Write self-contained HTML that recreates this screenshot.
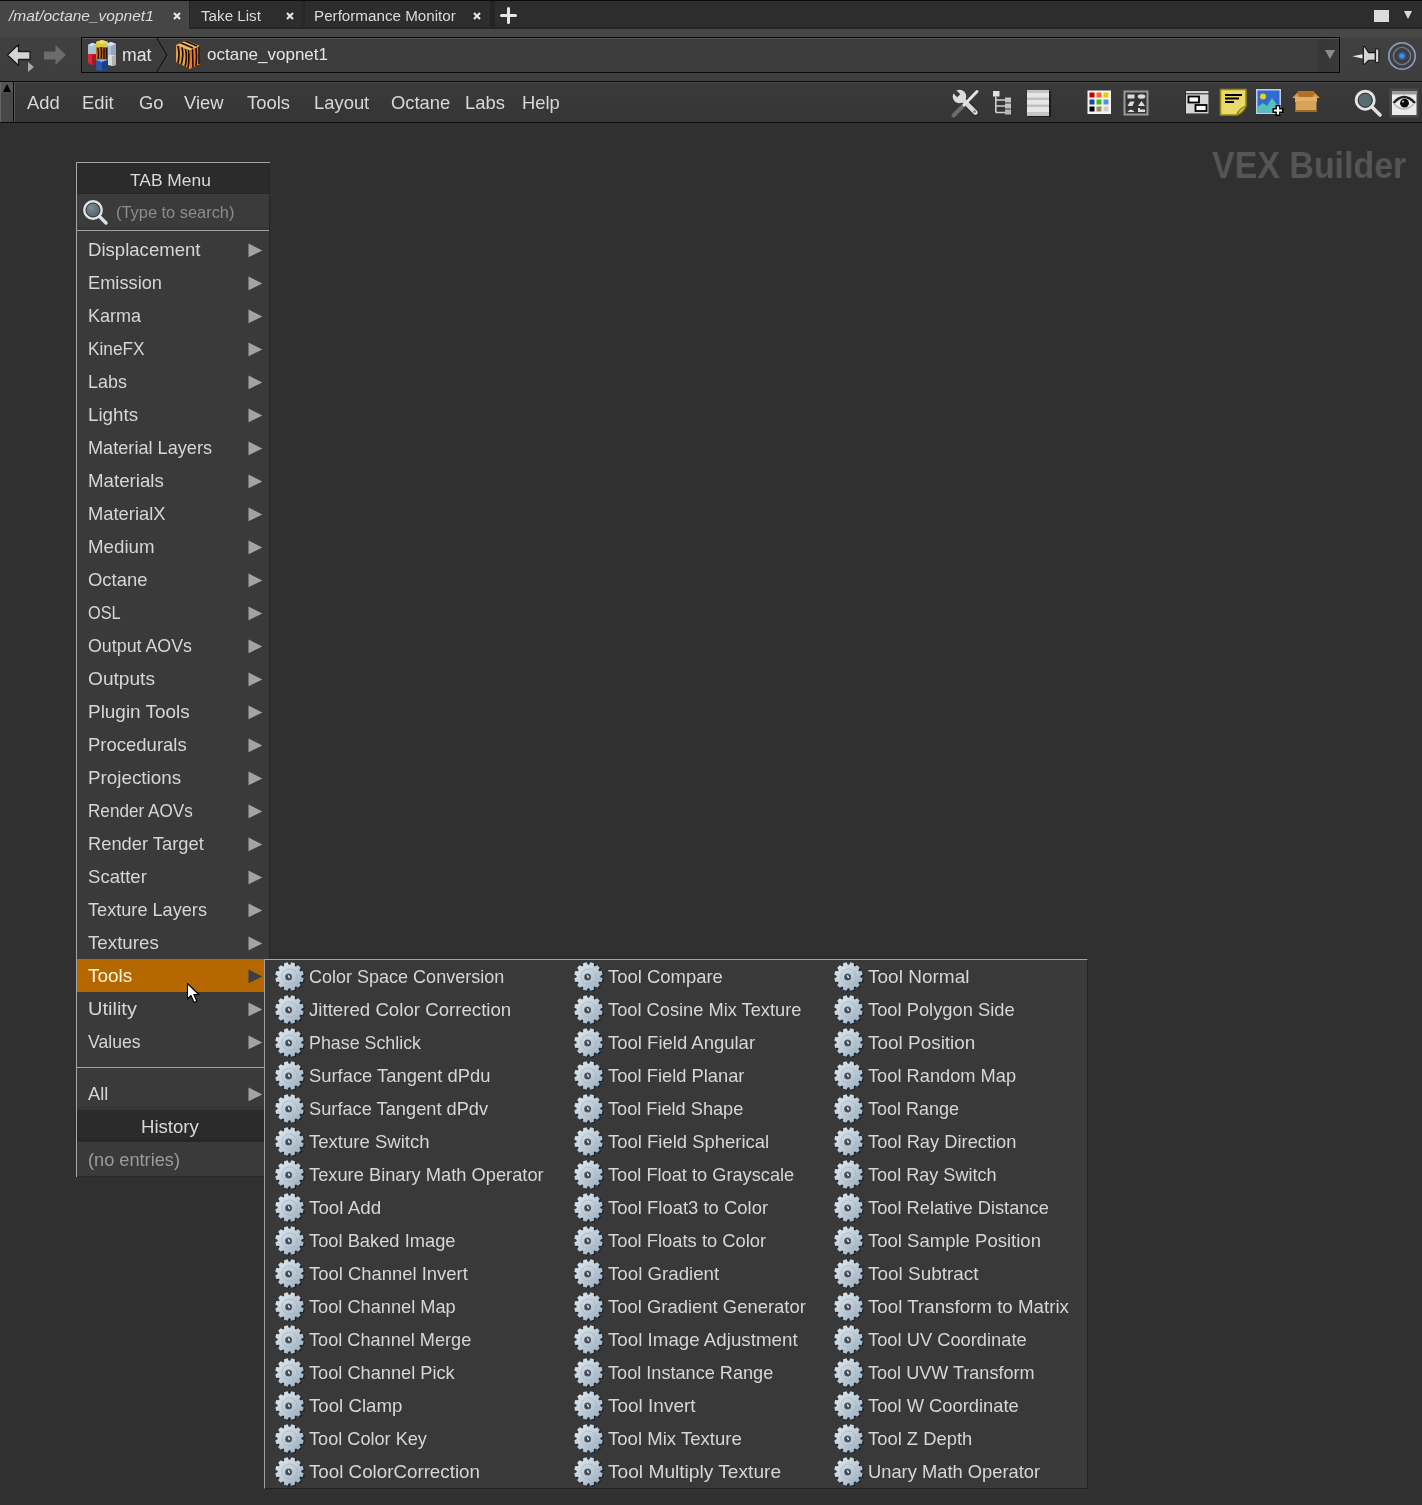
<!DOCTYPE html><html><head><meta charset="utf-8"><style>
*{box-sizing:border-box}
html,body{margin:0;padding:0}
body{width:1422px;height:1505px;background:#303030;position:relative;overflow:hidden;font-family:"Liberation Sans", sans-serif;color:#d6d6d6}
.a{position:absolute}
.a,.tab,.mb{will-change:transform}
.t{position:absolute;white-space:nowrap;font-size:18.2px;line-height:35px;height:33px}
.tab{position:absolute;white-space:nowrap;font-size:15.2px;line-height:29px;color:#dadada}
.mb{position:absolute;white-space:nowrap;font-size:18.4px;line-height:40px;top:83px;color:#d8d8d8}
.tri{position:absolute;width:15px;height:15px}
.g{position:absolute;width:32px;height:32px}
</style></head><body>
<svg width="0" height="0" style="position:absolute"><defs>
<linearGradient id="gg" x1="0" y1="0" x2="1" y2="1"><stop offset="0" stop-color="#e4ecf2"/><stop offset="0.5" stop-color="#c0ced9"/><stop offset="1" stop-color="#93a7b8"/></linearGradient>
<radialGradient id="gh" cx="50%" cy="50%" r="50%"><stop offset="0" stop-color="#2a323c"/><stop offset="1" stop-color="#55606b"/></radialGradient>
<symbol id="gear" viewBox="0 0 32 32"><path d="M17.13,4.32 L18.48,1.84 L22.02,2.78 L21.95,5.61 L23.04,6.24 L25.45,4.76 L28.04,7.35 L26.56,9.76 L27.19,10.85 L30.02,10.78 L30.96,14.32 L28.48,15.67 L28.48,16.93 L30.96,18.28 L30.02,21.82 L27.19,21.75 L26.56,22.84 L28.04,25.25 L25.45,27.84 L23.04,26.36 L21.95,26.99 L22.02,29.82 L18.48,30.76 L17.13,28.28 L15.87,28.28 L14.52,30.76 L10.98,29.82 L11.05,26.99 L9.96,26.36 L7.55,27.84 L4.96,25.25 L6.44,22.84 L5.81,21.75 L2.98,21.82 L2.04,18.28 L4.52,16.93 L4.52,15.67 L2.04,14.32 L2.98,10.78 L5.81,10.85 L6.44,9.76 L4.96,7.35 L7.55,4.76 L9.96,6.24 L11.05,5.61 L10.98,2.78 L14.52,1.84 L15.87,4.32Z" fill="#142032" opacity="0.9"/><path d="M16.12,3.72 L17.44,1.33 L20.90,2.26 L20.86,4.99 L21.93,5.60 L24.26,4.20 L26.80,6.74 L25.40,9.07 L26.01,10.14 L28.74,10.10 L29.67,13.56 L27.28,14.88 L27.28,16.12 L29.67,17.44 L28.74,20.90 L26.01,20.86 L25.40,21.93 L26.80,24.26 L24.26,26.80 L21.93,25.40 L20.86,26.01 L20.90,28.74 L17.44,29.67 L16.12,27.28 L14.88,27.28 L13.56,29.67 L10.10,28.74 L10.14,26.01 L9.07,25.40 L6.74,26.80 L4.20,24.26 L5.60,21.93 L4.99,20.86 L2.26,20.90 L1.33,17.44 L3.72,16.12 L3.72,14.88 L1.33,13.56 L2.26,10.10 L4.99,10.14 L5.60,9.07 L4.20,6.74 L6.74,4.20 L9.07,5.60 L10.14,4.99 L10.10,2.26 L13.56,1.33 L14.88,3.72Z" fill="url(#gg)"/><circle cx="15.5" cy="15.5" r="7.6" fill="none" stroke="#a6b3bc" stroke-width="0.7"/><circle cx="14.6" cy="16.1" r="3.5" fill="url(#gh)"/><path d="M13.7,14.7 L15.0,14.1 L16.2,16.7 L14.9,17.3 Z" fill="#f4f6f8"/></symbol>
</defs></svg>

<div class="a" style="left:0px;top:0px;width:1422px;height:1px;background:#0a0a0a;"></div>
<div class="a" style="left:0px;top:1px;width:1422px;height:27px;background:#2d2d2d;"></div>
<div class="a" style="left:0px;top:27px;width:1422px;height:2px;background:#252525;"></div>
<div class="a" style="left:0px;top:1px;width:189px;height:28px;background:#464646;"></div>
<div class="tab" style="left:9px;top:1px;font-style:italic;font-size:15.5px">/mat/octane_vopnet1</div>
<svg class="a" style="left:172px;top:11px" width="10" height="10" viewBox="0 0 10 10"><path d="M2,2 L8,8 M8,2 L2,8" stroke="#e8e8e8" stroke-width="2.1"/></svg>
<div class="a" style="left:189px;top:1px;width:1px;height:28px;background:#262626;"></div>
<div class="tab" style="left:201px;top:1px">Take List</div>
<svg class="a" style="left:285px;top:11px" width="10" height="10" viewBox="0 0 10 10"><path d="M2,2 L8,8 M8,2 L2,8" stroke="#e8e8e8" stroke-width="2.1"/></svg>
<div class="a" style="left:302px;top:1px;width:3px;height:28px;background:#272727;"></div>
<div class="tab" style="left:314px;top:1px">Performance Monitor</div>
<svg class="a" style="left:472px;top:11px" width="10" height="10" viewBox="0 0 10 10"><path d="M2,2 L8,8 M8,2 L2,8" stroke="#e8e8e8" stroke-width="2.1"/></svg>
<div class="a" style="left:490px;top:1px;width:5px;height:28px;background:#242424;"></div>
<svg class="a" style="left:500px;top:7px" width="17" height="17" viewBox="0 0 17 17"><path d="M8.5,1.5 L8.5,15.5 M1.5,8.5 L15.5,8.5" stroke="#e6e6e6" stroke-width="3" stroke-linecap="round"/></svg>
<div class="a" style="left:1374px;top:10px;width:15px;height:12px;background:#dcdcdc;"></div>
<div class="a" style="left:1404px;top:11px;width:0;height:0;border-left:4.5px solid transparent;border-right:4.5px solid transparent;border-top:8px solid #dcdcdc"></div>
<div class="a" style="left:0px;top:29px;width:1422px;height:52px;background:linear-gradient(#474747,#474747 8px,#404040 9px,#3e3e3e);"></div>
<div class="a" style="left:0px;top:29px;width:189px;height:8px;background:#464646;"></div>
<div class="a" style="left:0px;top:81px;width:1422px;height:1px;background:#0a0a0a;"></div>
<div class="a" style="left:81px;top:37px;width:1259px;height:36px;background:#3c3c3c;border:1px solid #0a0a0a"></div>
<div class="a" style="left:82px;top:38px;width:1257px;height:1px;background:#575757;"></div>
<div class="a" style="left:1318px;top:39px;width:21px;height:33px;background:linear-gradient(90deg,#363636,#3a3a3a);"></div>
<div class="a" style="left:1325px;top:50px;width:0;height:0;border-left:5px solid transparent;border-right:5px solid transparent;border-top:9px solid #8c8c8c"></div>
<div class="a" style="left:122px;top:38px;font-size:17.6px;line-height:34px;color:#e4e4e4;white-space:nowrap">mat</div>
<svg class="a" style="left:155px;top:38px" width="16" height="34"><path d="M3,0 L13,17 L3,34" fill="none" stroke="#555" stroke-width="1"/><path d="M2,0 L12,17 L2,34" fill="none" stroke="#151515" stroke-width="1.4"/></svg>
<div class="a" style="left:207px;top:38px;font-size:17px;line-height:34px;color:#e4e4e4;white-space:nowrap">octane_vopnet1</div>
<svg class="a" style="left:86px;top:39px" width="32" height="33" viewBox="0 0 32 33">
<path d="M2,6 L6,4 L10,5 L10,15 L2,15Z" fill="#a8c4d0"/><path d="M2,6 L6,4 L10,5 L6,7Z" fill="#d8e4ea"/>
<path d="M2,15 L10,15 L10,25 L6,26 L2,24Z" fill="#d42a38"/><path d="M6,16 L10,15 L10,25 L6,26Z" fill="#a81420"/>
<path d="M10,3 L16,1 L22,3 L22,8 L10,8Z" fill="#e0c830"/><path d="M10,3 L16,1 L22,3 L16,5Z" fill="#f4e060"/>
<path d="M20,5 L25,3 L30,5 L30,16 L20,16Z" fill="#b4c2d6"/><path d="M20,5 L25,3 L30,5 L25,7Z" fill="#dde4ee"/><path d="M25,7 L30,5 L30,16 L25,16Z" fill="#96a6bc"/>
<path d="M22,16 L30,16 L30,26 L26,27 L22,26Z" fill="#d8dcd8"/><path d="M26,17 L30,16 L30,26 L26,27Z" fill="#b0b4b0"/>
<path d="M10,8 L22,8 L22,21 L10,21Z" fill="#c87820"/><path d="M16,8 L22,8 L22,21 L16,21Z" fill="#a85a10"/><path d="M12,9 Q13,15 12,20 M15,8 Q16,14 15,21 M18,9 L18,20 M20.5,9 L20.5,20" stroke="#2a1206" stroke-width="1.5" fill="none"/>
<path d="M10,21 L16,20 L22,21 L22,31 L16,32 L10,31Z" fill="#2858a8"/><path d="M10,21 L16,20 L22,21 L16,23Z" fill="#90b0e0"/><path d="M16,23 L22,21 L22,31 L16,32Z" fill="#1c4088"/>
</svg>
<svg class="a" style="left:175px;top:40px" width="28" height="31" viewBox="0 0 28 31">
<defs><clipPath id="tl"><path d="M1,5 L15,10.5 L15,29 L1,22Z"/></clipPath><clipPath id="tr"><path d="M15,10.5 L25,6 L25,24 L15,29Z"/></clipPath><clipPath id="tt"><path d="M1,5 L11,0.5 L25,6 L15,10.5Z"/></clipPath></defs>
<path d="M1,5 L11,0.5 L25,6 L15,10.5Z" fill="#e9b868"/>
<path d="M1,5 L15,10.5 L15,29 L1,22Z" fill="#e6a040"/>
<path d="M15,10.5 L25,6 L25,24 L15,29Z" fill="#f07a18"/>
<g clip-path="url(#tt)" stroke="#1a0c02" stroke-width="1.6" fill="none"><path d="M4,2 L18,8 M8,0 L22,6 M13,-1 L26,4"/></g>
<g clip-path="url(#tl)" stroke="#1a0c02" stroke-width="1.7" fill="none"><path d="M3,6 Q5,14 3,23 M7,7 Q9,16 6,25 M10.5,9 Q12.5,18 10,27 M13.5,10 Q14.5,19 13,28"/></g>
<g clip-path="url(#tr)" stroke="#1a0c02" stroke-width="1.6" fill="none"><path d="M17.5,9 L18,28 M21,8 Q22,17 21,26 M24,6 L24,24"/></g>
</svg>
<svg class="a" style="left:5px;top:43px" width="32" height="31" viewBox="0 0 32 31"><path d="M2.5,12 L13.5,1.5 L13.5,8.5 L25,8.5 L25,16.5 L13.5,16.5 L13.5,22.5 Z" fill="#d4d4d4" stroke="#1c1c1c" stroke-width="1.3" stroke-linejoin="round"/><path d="M23,19 L29,24 L23,29 Z" fill="#a8a8a8"/></svg>
<svg class="a" style="left:42px;top:43px" width="26" height="26" viewBox="0 0 26 26"><path d="M24,12 L13.5,2 L13.5,8.5 L2,8.5 L2,16.5 L13.5,16.5 L13.5,22 Z" fill="#6c6c6c"/></svg>
<svg class="a" style="left:1350px;top:44px" width="32" height="24" viewBox="0 0 32 24"><path d="M2.3,12.3 L12.6,10.2 L12.6,14.4 Z" fill="#e8e8e8"/><path d="M13.4,2.6 L14.8,2.6 L18.6,8.6 L25.2,8.6 L25.2,16.2 L18.6,16.2 L14.8,20.2 L13.4,20.2 Z" fill="#d4d4d4" stroke="#151515" stroke-width="1.1" stroke-linejoin="round"/><rect x="25.6" y="5" width="3.2" height="13.4" fill="#dcdcdc" stroke="#151515" stroke-width="1"/></svg>
<svg class="a" style="left:1386px;top:40px" width="32" height="32" viewBox="0 0 32 32"><defs><radialGradient id="bd" cx="50%" cy="50%" r="50%"><stop offset="0" stop-color="#5aa8f0"/><stop offset="0.6" stop-color="#2a70c8"/><stop offset="1" stop-color="#2a70c8" stop-opacity="0"/></radialGradient></defs><circle cx="16" cy="16" r="13.2" fill="none" stroke="#8796b4" stroke-width="1.8"/><circle cx="16" cy="16" r="8.6" fill="none" stroke="#6d7a92" stroke-width="1.4"/><circle cx="16" cy="16" r="4.6" fill="url(#bd)"/></svg>
<div class="a" style="left:0px;top:82px;width:1422px;height:40px;background:linear-gradient(#484848 0,#484848 1px,#3a3a3a 1px,#353535);"></div>
<div class="a" style="left:0px;top:122px;width:1422px;height:1px;background:#0c0c0c;"></div>
<div class="a" style="left:0px;top:82px;width:13px;height:40px;background:linear-gradient(#545454,#545454 10px,#474747 11px,#474747);"></div>
<div class="a" style="left:0px;top:82px;width:1px;height:40px;background:#666;"></div>
<div class="a" style="left:13px;top:82px;width:1px;height:40px;background:#0c0c0c;"></div>
<div class="a" style="left:14px;top:82px;width:1px;height:40px;background:#555;"></div>
<div class="a" style="left:2.5px;top:83.5px;width:0;height:0;border-left:4px solid transparent;border-right:4px solid transparent;border-bottom:8px solid #000"></div>
<div class="mb" style="left:27px">Add</div>
<div class="mb" style="left:82px">Edit</div>
<div class="mb" style="left:139px">Go</div>
<div class="mb" style="left:184px">View</div>
<div class="mb" style="left:247px">Tools</div>
<div class="mb" style="left:314px">Layout</div>
<div class="mb" style="left:391px">Octane</div>
<div class="mb" style="left:465px">Labs</div>
<div class="mb" style="left:522px">Help</div>
<svg class="a" style="left:950px;top:87px" width="32" height="32" viewBox="0 0 32 32">
<path d="M12.5,12.5 L26,26" stroke="#151515" stroke-width="6.4" stroke-linecap="round" opacity="0.45"/>
<path d="M10,10 L25.5,25.5" stroke="#d8d8d8" stroke-width="4.6" stroke-linecap="round"/>
<circle cx="24.6" cy="24.6" r="1.4" fill="#808080"/>
<circle cx="9.5" cy="9.5" r="6.8" fill="#dcdcdc"/>
<path d="M10.3,7.2 L2.8,-0.3 L-0.3,2.8 L7.2,10.3 Z" fill="#393939"/>
<path d="M3.5,28.5 L14,18" stroke="#6c6c6c" stroke-width="4" stroke-linecap="round"/>
<path d="M14,18 L27,4.5" stroke="#e4e4e4" stroke-width="3" stroke-linecap="round"/>
</svg>
<svg class="a" style="left:992px;top:90px" width="20" height="26" viewBox="0 0 20 26">
<rect x="1" y="1" width="6.5" height="5.5" fill="#e2e2e2"/>
<path d="M3.8,6.5 L3.8,22.5 M3.8,10 L13,10 M3.8,16 L13,16 M3.8,22.5 L13,22.5" stroke="#cfcfcf" stroke-width="1.6"/>
<rect x="13" y="7.5" width="6" height="5" fill="#c2c2c2"/><rect x="13" y="13.5" width="6" height="5" fill="#c2c2c2"/><rect x="13" y="19.5" width="6" height="5" fill="#b8b8b8"/>
</svg>
<svg class="a" style="left:1026px;top:89px" width="25" height="28" viewBox="0 0 25 28">
<rect x="2" y="2" width="23" height="26" fill="#111" opacity="0.7"/>
<rect x="1" y="1" width="22" height="26" fill="#e6e6e6"/>
<rect x="1" y="1" width="22" height="3" fill="#c4c4c4"/><rect x="1" y="8.5" width="22" height="2.5" fill="#c0c0c0"/><rect x="1" y="15.5" width="22" height="2.5" fill="#c0c0c0"/><rect x="1" y="23" width="22" height="4" fill="#c4c4c4"/>
</svg>
<svg class="a" style="left:1087px;top:90px" width="25" height="25" viewBox="0 0 25 25">
<rect x="0.5" y="0.5" width="23.5" height="23.5" fill="#f4f4f4"/>
<rect x="2.5" y="2.5" width="5" height="5" fill="#c00000"/><rect x="9.5" y="2.5" width="5" height="5" fill="#f06a10"/><rect x="16.5" y="2.5" width="5" height="5" fill="#e4cc10"/>
<rect x="2.5" y="9.5" width="5" height="5" fill="#1a4a98"/><rect x="9.5" y="9.5" width="5" height="5" fill="#3cbc18"/><rect x="16.5" y="9.5" width="5" height="5" fill="#5a8cd8"/>
<rect x="2.5" y="16.5" width="5" height="5" fill="#000"/><rect x="9.5" y="16.5" width="5" height="5" fill="#a08a62"/><rect x="16.5" y="16.5" width="5" height="5" fill="#cfcfc6"/>
</svg>
<svg class="a" style="left:1123px;top:90px" width="27" height="26" viewBox="0 0 27 26">
<rect x="1.5" y="1.5" width="23" height="23" fill="#333" stroke="#9a9a9a" stroke-width="2"/>
<rect x="4.5" y="4.5" width="7" height="4" fill="#dcdcdc"/><ellipse cx="18.5" cy="6.5" rx="3.8" ry="2.2" fill="#dcdcdc"/>
<path d="M4.5,16 L7,11.5 L11.5,11.5 L9.5,16 Z" fill="#dcdcdc"/><path d="M15,16 L18.5,11 L22,16 Z" fill="#dcdcdc"/>
<path d="M4.5,22 Q8,17 11.5,22 Z" fill="#dcdcdc"/><path d="M15,22 L15,18 L17,18 L17,19.5 L22,19.5 L22,22 Z" fill="#dcdcdc"/>
</svg>
<svg class="a" style="left:1185px;top:90px" width="25" height="25" viewBox="0 0 25 25">
<rect x="0.5" y="0.5" width="23.5" height="23.5" fill="#222"/>
<rect x="1" y="1" width="22.5" height="2.3" fill="#d4d4d4"/>
<rect x="1" y="4.3" width="22.5" height="19.2" fill="#d6d6d6"/>
<rect x="3.5" y="6.5" width="10.5" height="6" fill="#fafafa" stroke="#000" stroke-width="1.8"/>
<rect x="10.5" y="15" width="11" height="6" fill="#fafafa" stroke="#000" stroke-width="1.8"/>
</svg>
<svg class="a" style="left:1219px;top:88px" width="29" height="29" viewBox="0 0 29 29">
<path d="M1.5,1.5 L27,1.5 L27,18 Q24,25 18,27 L1.5,27 Z" fill="#e9da6a" stroke="#9a8a10" stroke-width="1.6"/>
<path d="M18,27 Q19,21 27,18" fill="#c8b440" stroke="#8a7a10" stroke-width="1.3"/>
<path d="M6,7 L23,7 M6,10.5 L20,10.5 M6,14 L15,14" stroke="#000" stroke-width="1.9"/>
</svg>
<svg class="a" style="left:1255px;top:88px" width="32" height="30" viewBox="0 0 32 30">
<rect x="1" y="1" width="25" height="25" fill="#bcd0e4"/>
<rect x="2.5" y="2.5" width="22" height="22" fill="#2e6cd0"/>
<circle cx="8" cy="8.5" r="3" fill="#f0d010"/>
<path d="M2.5,24.5 L2.5,19 L8,15 L12,18 L17,10 L24.5,20 L24.5,24.5 Z" fill="#5cc8b8" opacity="0.9"/>
<path d="M23,17 L23,28 M17.5,22.5 L28.5,22.5" stroke="#000" stroke-width="5"/>
<path d="M23,18.5 L23,26.5 M19,22.5 L27,22.5" stroke="#fff" stroke-width="2.2"/>
</svg>
<svg class="a" style="left:1291px;top:89px" width="30" height="24" viewBox="0 0 30 24">
<path d="M4,8 L7,2 L23,2 L26,8 Z" fill="#b07020"/>
<path d="M1,9 L6,4 L9,9 Z M29,9 L24,4 L21,9 Z" fill="#d89a40"/>
<rect x="4" y="8" width="22" height="5" fill="#e0b070"/>
<rect x="4.5" y="12" width="21" height="11" fill="#d8a258"/>
<path d="M4.5,22 L25.5,22" stroke="#a06a20" stroke-width="2"/>
</svg>
<svg class="a" style="left:1353px;top:88px" width="30" height="30" viewBox="0 0 30 30">
<line x1="18.5" y1="18.5" x2="27" y2="27" stroke="#e0e0e0" stroke-width="3.6" stroke-linecap="round"/>
<circle cx="12.2" cy="12.2" r="9" fill="#5b6b73" stroke="#e4e4e4" stroke-width="3"/>
<circle cx="12.2" cy="12.2" r="7" fill="none" stroke="#2c3236" stroke-width="1"/>
</svg>
<svg class="a" style="left:1389px;top:88px" width="30" height="30" viewBox="0 0 30 30">
<rect x="0.5" y="0.5" width="29" height="29" fill="#4a4a4a"/>
<rect x="3" y="3" width="24.5" height="24" fill="#ececec"/>
<rect x="3" y="3" width="24.5" height="3.5" fill="#9c9c9c"/>
<path d="M4.5,15 Q15,3 26,15" fill="none" stroke="#222" stroke-width="2.3"/>
<path d="M5,16 Q15,26 25,16" fill="none" stroke="#b8b8b8" stroke-width="1.6"/>
<circle cx="15.5" cy="15.2" r="4.4" fill="#0a0a0a"/>
<circle cx="14" cy="13.6" r="1.1" fill="#bbb"/>
</svg>

<div class="a" style="left:1212px;top:142px;font-size:36.3px;line-height:48px;font-weight:bold;color:#555555;white-space:nowrap;transform:scaleX(0.935);transform-origin:0 0">VEX Builder</div>
<div class="a" style="left:76px;top:162px;width:194px;height:1015px;background:#3a3a3a;"></div>
<div class="a" style="left:269px;top:162px;width:1px;height:1015px;background:#262626;"></div>
<div class="a" style="left:76px;top:162px;width:194px;height:1px;background:#a6a6a6;"></div>
<div class="a" style="left:76px;top:162px;width:1px;height:1015px;background:#a6a6a6;"></div>
<div class="a" style="left:77px;top:163px;width:192px;height:30px;background:#2b2b2b;"></div>
<div class="a" style="left:77px;top:193px;width:192px;height:1px;background:#262626;"></div>
<div class="a" style="left:130px;top:163px;line-height:35px;font-size:17.4px;color:#d8d8d8;white-space:nowrap">TAB Menu</div>
<div class="a" style="left:77px;top:194px;width:192px;height:33px;background:#3b3b3b;"></div>
<div class="a" style="left:77px;top:227px;width:192px;height:3px;background:#363636;"></div>
<div class="a" style="left:77px;top:230px;width:192px;height:1px;background:#a0a0a0;"></div>
<svg class="a" style="left:80px;top:197px" width="30" height="30" viewBox="0 0 30 30"><line x1="18" y1="18" x2="26" y2="26" stroke="#dfe2e2" stroke-width="3.4" stroke-linecap="round"/><defs><radialGradient id="mg" cx="40%" cy="35%" r="65%"><stop offset="0" stop-color="#7d8c92"/><stop offset="1" stop-color="#4e5c64"/></radialGradient></defs><circle cx="13" cy="13" r="8.6" fill="url(#mg)" stroke="#e2e4e4" stroke-width="2.6"/><circle cx="13" cy="13" r="7" fill="none" stroke="#2c3438" stroke-width="0.9"/></svg>
<div class="a" style="left:115.5px;top:194px;line-height:37px;font-size:16.4px;color:#8c8c8c;white-space:nowrap">(Type to search)</div>
<div class="t" style="left:88px;top:233px;transform:scaleX(1.0212);transform-origin:0 0;">Displacement</div>
<svg class="tri" style="left:247.5px;top:242.5px" viewBox="0 0 15 15"><path d="M0.5,0.6 L14.3,7.4 L0.5,14.2Z" fill="#a3a3a3"/></svg>
<div class="t" style="left:88px;top:266px;transform:scaleX(1.0028);transform-origin:0 0;">Emission</div>
<svg class="tri" style="left:247.5px;top:275.5px" viewBox="0 0 15 15"><path d="M0.5,0.6 L14.3,7.4 L0.5,14.2Z" fill="#a3a3a3"/></svg>
<div class="t" style="left:88px;top:299px;transform:scaleX(0.9924);transform-origin:0 0;">Karma</div>
<svg class="tri" style="left:247.5px;top:308.5px" viewBox="0 0 15 15"><path d="M0.5,0.6 L14.3,7.4 L0.5,14.2Z" fill="#a3a3a3"/></svg>
<div class="t" style="left:88px;top:332px;transform:scaleX(0.9478);transform-origin:0 0;">KineFX</div>
<svg class="tri" style="left:247.5px;top:341.5px" viewBox="0 0 15 15"><path d="M0.5,0.6 L14.3,7.4 L0.5,14.2Z" fill="#a3a3a3"/></svg>
<div class="t" style="left:88px;top:365px;transform:scaleX(0.9867);transform-origin:0 0;">Labs</div>
<svg class="tri" style="left:247.5px;top:374.5px" viewBox="0 0 15 15"><path d="M0.5,0.6 L14.3,7.4 L0.5,14.2Z" fill="#a3a3a3"/></svg>
<div class="t" style="left:88px;top:398px;transform:scaleX(1.0323);transform-origin:0 0;">Lights</div>
<svg class="tri" style="left:247.5px;top:407.5px" viewBox="0 0 15 15"><path d="M0.5,0.6 L14.3,7.4 L0.5,14.2Z" fill="#a3a3a3"/></svg>
<div class="t" style="left:88px;top:431px;transform:scaleX(0.9976);transform-origin:0 0;">Material Layers</div>
<svg class="tri" style="left:247.5px;top:440.5px" viewBox="0 0 15 15"><path d="M0.5,0.6 L14.3,7.4 L0.5,14.2Z" fill="#a3a3a3"/></svg>
<div class="t" style="left:88px;top:464px;transform:scaleX(1.0280);transform-origin:0 0;">Materials</div>
<svg class="tri" style="left:247.5px;top:473.5px" viewBox="0 0 15 15"><path d="M0.5,0.6 L14.3,7.4 L0.5,14.2Z" fill="#a3a3a3"/></svg>
<div class="t" style="left:88px;top:497px;transform:scaleX(1.0094);transform-origin:0 0;">MaterialX</div>
<svg class="tri" style="left:247.5px;top:506.5px" viewBox="0 0 15 15"><path d="M0.5,0.6 L14.3,7.4 L0.5,14.2Z" fill="#a3a3a3"/></svg>
<div class="t" style="left:88px;top:530px;transform:scaleX(1.0288);transform-origin:0 0;">Medium</div>
<svg class="tri" style="left:247.5px;top:539.5px" viewBox="0 0 15 15"><path d="M0.5,0.6 L14.3,7.4 L0.5,14.2Z" fill="#a3a3a3"/></svg>
<div class="t" style="left:88px;top:563px;transform:scaleX(1.0142);transform-origin:0 0;">Octane</div>
<svg class="tri" style="left:247.5px;top:572.5px" viewBox="0 0 15 15"><path d="M0.5,0.6 L14.3,7.4 L0.5,14.2Z" fill="#a3a3a3"/></svg>
<div class="t" style="left:88px;top:596px;transform:scaleX(0.8986);transform-origin:0 0;">OSL</div>
<svg class="tri" style="left:247.5px;top:605.5px" viewBox="0 0 15 15"><path d="M0.5,0.6 L14.3,7.4 L0.5,14.2Z" fill="#a3a3a3"/></svg>
<div class="t" style="left:88px;top:629px;transform:scaleX(0.9799);transform-origin:0 0;">Output AOVs</div>
<svg class="tri" style="left:247.5px;top:638.5px" viewBox="0 0 15 15"><path d="M0.5,0.6 L14.3,7.4 L0.5,14.2Z" fill="#a3a3a3"/></svg>
<div class="t" style="left:88px;top:662px;transform:scaleX(1.0520);transform-origin:0 0;">Outputs</div>
<svg class="tri" style="left:247.5px;top:671.5px" viewBox="0 0 15 15"><path d="M0.5,0.6 L14.3,7.4 L0.5,14.2Z" fill="#a3a3a3"/></svg>
<div class="t" style="left:88px;top:695px;transform:scaleX(1.0408);transform-origin:0 0;">Plugin Tools</div>
<svg class="tri" style="left:247.5px;top:704.5px" viewBox="0 0 15 15"><path d="M0.5,0.6 L14.3,7.4 L0.5,14.2Z" fill="#a3a3a3"/></svg>
<div class="t" style="left:88px;top:728px;transform:scaleX(1.0168);transform-origin:0 0;">Procedurals</div>
<svg class="tri" style="left:247.5px;top:737.5px" viewBox="0 0 15 15"><path d="M0.5,0.6 L14.3,7.4 L0.5,14.2Z" fill="#a3a3a3"/></svg>
<div class="t" style="left:88px;top:761px;transform:scaleX(1.0350);transform-origin:0 0;">Projections</div>
<svg class="tri" style="left:247.5px;top:770.5px" viewBox="0 0 15 15"><path d="M0.5,0.6 L14.3,7.4 L0.5,14.2Z" fill="#a3a3a3"/></svg>
<div class="t" style="left:88px;top:794px;transform:scaleX(0.9416);transform-origin:0 0;">Render AOVs</div>
<svg class="tri" style="left:247.5px;top:803.5px" viewBox="0 0 15 15"><path d="M0.5,0.6 L14.3,7.4 L0.5,14.2Z" fill="#a3a3a3"/></svg>
<div class="t" style="left:88px;top:827px;transform:scaleX(1.0070);transform-origin:0 0;">Render Target</div>
<svg class="tri" style="left:247.5px;top:836.5px" viewBox="0 0 15 15"><path d="M0.5,0.6 L14.3,7.4 L0.5,14.2Z" fill="#a3a3a3"/></svg>
<div class="t" style="left:88px;top:860px;transform:scaleX(1.0212);transform-origin:0 0;">Scatter</div>
<svg class="tri" style="left:247.5px;top:869.5px" viewBox="0 0 15 15"><path d="M0.5,0.6 L14.3,7.4 L0.5,14.2Z" fill="#a3a3a3"/></svg>
<div class="t" style="left:88px;top:893px;transform:scaleX(0.9975);transform-origin:0 0;">Texture Layers</div>
<svg class="tri" style="left:247.5px;top:902.5px" viewBox="0 0 15 15"><path d="M0.5,0.6 L14.3,7.4 L0.5,14.2Z" fill="#a3a3a3"/></svg>
<div class="t" style="left:88px;top:926px;transform:scaleX(1.0296);transform-origin:0 0;">Textures</div>
<svg class="tri" style="left:247.5px;top:935.5px" viewBox="0 0 15 15"><path d="M0.5,0.6 L14.3,7.4 L0.5,14.2Z" fill="#a3a3a3"/></svg>
<div class="a" style="left:77px;top:959px;width:187px;height:33px;background:#b66800;"></div>
<div class="t" style="left:88px;top:959px;color:#fff4dc;transform:scaleX(1.0434);transform-origin:0 0;">Tools</div>
<svg class="tri" style="left:247.5px;top:968.5px" viewBox="0 0 15 15"><path d="M0.5,0.6 L14.3,7.4 L0.5,14.2Z" fill="#3b3e4a"/></svg>
<div class="t" style="left:88px;top:992px;transform:scaleX(1.1000);transform-origin:0 0;">Utility</div>
<svg class="tri" style="left:247.5px;top:1001.5px" viewBox="0 0 15 15"><path d="M0.5,0.6 L14.3,7.4 L0.5,14.2Z" fill="#a3a3a3"/></svg>
<div class="t" style="left:88px;top:1025px;transform:scaleX(0.9682);transform-origin:0 0;">Values</div>
<svg class="tri" style="left:247.5px;top:1034.5px" viewBox="0 0 15 15"><path d="M0.5,0.6 L14.3,7.4 L0.5,14.2Z" fill="#a3a3a3"/></svg>
<div class="a" style="left:77px;top:1067px;width:192px;height:1px;background:#a0a0a0;"></div>
<div class="t" style="left:88px;top:1077px">All</div>
<svg class="tri" style="left:247.5px;top:1086.5px" viewBox="0 0 15 15"><path d="M0.5,0.6 L14.3,7.4 L0.5,14.2Z" fill="#a3a3a3"/></svg>
<div class="a" style="left:77px;top:1106px;width:192px;height:4px;background:#363636;"></div>
<div class="a" style="left:77px;top:1110px;width:192px;height:28px;background:#2b2b2b;"></div>
<div class="a" style="left:77px;top:1138px;width:192px;height:4px;background:#272727;"></div>
<div class="a" style="left:140.5px;top:1109px;line-height:35px;font-size:18.6px;color:#d8d8d8;white-space:nowrap">History</div>
<div class="t" style="left:88px;top:1143px;color:#9c9c9c">(no entries)</div>
<div class="a" style="left:77px;top:1176px;width:192px;height:1px;background:#2a2a2a;"></div>
<div class="a" style="left:270px;top:954px;width:817px;height:5px;background:linear-gradient(#303030,#2c2c2c);"></div>
<div class="a" style="left:264px;top:959px;width:824px;height:530px;background:#393939;border-top:1px solid #a2a2a2;border-left:1px solid #a2a2a2;border-right:1px solid #222;border-bottom:1px solid #222"></div>
<div class="a" style="left:1080px;top:960px;width:7px;height:528px;background:#3b3b3b;"></div>
<svg class="g" style="left:274px;top:961px"><use href="#gear"/></svg>
<div class="t" style="left:309px;top:960px;transform:scaleX(0.9902);transform-origin:0 0;">Color Space Conversion</div>
<svg class="g" style="left:274px;top:994px"><use href="#gear"/></svg>
<div class="t" style="left:309px;top:993px;transform:scaleX(1.0261);transform-origin:0 0;">Jittered Color Correction</div>
<svg class="g" style="left:274px;top:1027px"><use href="#gear"/></svg>
<div class="t" style="left:309px;top:1026px;transform:scaleX(0.9804);transform-origin:0 0;">Phase Schlick</div>
<svg class="g" style="left:274px;top:1060px"><use href="#gear"/></svg>
<div class="t" style="left:309px;top:1059px;transform:scaleX(1.0096);transform-origin:0 0;">Surface Tangent dPdu</div>
<svg class="g" style="left:274px;top:1093px"><use href="#gear"/></svg>
<div class="t" style="left:309px;top:1092px;transform:scaleX(1.0028);transform-origin:0 0;">Surface Tangent dPdv</div>
<svg class="g" style="left:274px;top:1126px"><use href="#gear"/></svg>
<div class="t" style="left:309px;top:1125px;transform:scaleX(1.0196);transform-origin:0 0;">Texture Switch</div>
<svg class="g" style="left:274px;top:1159px"><use href="#gear"/></svg>
<div class="t" style="left:309px;top:1158px;transform:scaleX(1.0051);transform-origin:0 0;">Texure Binary Math Operator</div>
<svg class="g" style="left:274px;top:1192px"><use href="#gear"/></svg>
<div class="t" style="left:309px;top:1191px;transform:scaleX(1.0336);transform-origin:0 0;">Tool Add</div>
<svg class="g" style="left:274px;top:1225px"><use href="#gear"/></svg>
<div class="t" style="left:309px;top:1224px;transform:scaleX(1.0062);transform-origin:0 0;">Tool Baked Image</div>
<svg class="g" style="left:274px;top:1258px"><use href="#gear"/></svg>
<div class="t" style="left:309px;top:1257px;transform:scaleX(1.0134);transform-origin:0 0;">Tool Channel Invert</div>
<svg class="g" style="left:274px;top:1291px"><use href="#gear"/></svg>
<div class="t" style="left:309px;top:1290px;transform:scaleX(1.0010);transform-origin:0 0;">Tool Channel Map</div>
<svg class="g" style="left:274px;top:1324px"><use href="#gear"/></svg>
<div class="t" style="left:309px;top:1323px;transform:scaleX(0.9969);transform-origin:0 0;">Tool Channel Merge</div>
<svg class="g" style="left:274px;top:1357px"><use href="#gear"/></svg>
<div class="t" style="left:309px;top:1356px;transform:scaleX(1.0010);transform-origin:0 0;">Tool Channel Pick</div>
<svg class="g" style="left:274px;top:1390px"><use href="#gear"/></svg>
<div class="t" style="left:309px;top:1389px;transform:scaleX(1.0257);transform-origin:0 0;">Tool Clamp</div>
<svg class="g" style="left:274px;top:1423px"><use href="#gear"/></svg>
<div class="t" style="left:309px;top:1422px;transform:scaleX(0.9966);transform-origin:0 0;">Tool Color Key</div>
<svg class="g" style="left:274px;top:1456px"><use href="#gear"/></svg>
<div class="t" style="left:309px;top:1455px;transform:scaleX(1.0310);transform-origin:0 0;">Tool ColorCorrection</div>
<svg class="g" style="left:573px;top:961px"><use href="#gear"/></svg>
<div class="t" style="left:608px;top:960px;transform:scaleX(1.0142);transform-origin:0 0;">Tool Compare</div>
<svg class="g" style="left:573px;top:994px"><use href="#gear"/></svg>
<div class="t" style="left:608px;top:993px;transform:scaleX(1.0037);transform-origin:0 0;">Tool Cosine Mix Texture</div>
<svg class="g" style="left:573px;top:1027px"><use href="#gear"/></svg>
<div class="t" style="left:608px;top:1026px;transform:scaleX(1.0173);transform-origin:0 0;">Tool Field Angular</div>
<svg class="g" style="left:573px;top:1060px"><use href="#gear"/></svg>
<div class="t" style="left:608px;top:1059px;transform:scaleX(1.0074);transform-origin:0 0;">Tool Field Planar</div>
<svg class="g" style="left:573px;top:1093px"><use href="#gear"/></svg>
<div class="t" style="left:608px;top:1092px;transform:scaleX(0.9985);transform-origin:0 0;">Tool Field Shape</div>
<svg class="g" style="left:573px;top:1126px"><use href="#gear"/></svg>
<div class="t" style="left:608px;top:1125px;transform:scaleX(1.0152);transform-origin:0 0;">Tool Field Spherical</div>
<svg class="g" style="left:573px;top:1159px"><use href="#gear"/></svg>
<div class="t" style="left:608px;top:1158px;transform:scaleX(1.0010);transform-origin:0 0;">Tool Float to Grayscale</div>
<svg class="g" style="left:573px;top:1192px"><use href="#gear"/></svg>
<div class="t" style="left:608px;top:1191px;transform:scaleX(1.0152);transform-origin:0 0;">Tool Float3 to Color</div>
<svg class="g" style="left:573px;top:1225px"><use href="#gear"/></svg>
<div class="t" style="left:608px;top:1224px;transform:scaleX(1.0096);transform-origin:0 0;">Tool Floats to Color</div>
<svg class="g" style="left:573px;top:1258px"><use href="#gear"/></svg>
<div class="t" style="left:608px;top:1257px;transform:scaleX(1.0279);transform-origin:0 0;">Tool Gradient</div>
<svg class="g" style="left:573px;top:1291px"><use href="#gear"/></svg>
<div class="t" style="left:608px;top:1290px;transform:scaleX(1.0139);transform-origin:0 0;">Tool Gradient Generator</div>
<svg class="g" style="left:573px;top:1324px"><use href="#gear"/></svg>
<div class="t" style="left:608px;top:1323px;transform:scaleX(1.0305);transform-origin:0 0;">Tool Image Adjustment</div>
<svg class="g" style="left:573px;top:1357px"><use href="#gear"/></svg>
<div class="t" style="left:608px;top:1356px;transform:scaleX(0.9964);transform-origin:0 0;">Tool Instance Range</div>
<svg class="g" style="left:573px;top:1390px"><use href="#gear"/></svg>
<div class="t" style="left:608px;top:1389px;transform:scaleX(1.0431);transform-origin:0 0;">Tool Invert</div>
<svg class="g" style="left:573px;top:1423px"><use href="#gear"/></svg>
<div class="t" style="left:608px;top:1422px;transform:scaleX(1.0207);transform-origin:0 0;">Tool Mix Texture</div>
<svg class="g" style="left:573px;top:1456px"><use href="#gear"/></svg>
<div class="t" style="left:608px;top:1455px;transform:scaleX(1.0526);transform-origin:0 0;">Tool Multiply Texture</div>
<svg class="g" style="left:833px;top:961px"><use href="#gear"/></svg>
<div class="t" style="left:868px;top:960px;transform:scaleX(1.0461);transform-origin:0 0;">Tool Normal</div>
<svg class="g" style="left:833px;top:994px"><use href="#gear"/></svg>
<div class="t" style="left:868px;top:993px;transform:scaleX(1.0076);transform-origin:0 0;">Tool Polygon Side</div>
<svg class="g" style="left:833px;top:1027px"><use href="#gear"/></svg>
<div class="t" style="left:868px;top:1026px;transform:scaleX(1.0414);transform-origin:0 0;">Tool Position</div>
<svg class="g" style="left:833px;top:1060px"><use href="#gear"/></svg>
<div class="t" style="left:868px;top:1059px;transform:scaleX(1.0034);transform-origin:0 0;">Tool Random Map</div>
<svg class="g" style="left:833px;top:1093px"><use href="#gear"/></svg>
<div class="t" style="left:868px;top:1092px;transform:scaleX(0.9880);transform-origin:0 0;">Tool Range</div>
<svg class="g" style="left:833px;top:1126px"><use href="#gear"/></svg>
<div class="t" style="left:868px;top:1125px;transform:scaleX(1.0061);transform-origin:0 0;">Tool Ray Direction</div>
<svg class="g" style="left:833px;top:1159px"><use href="#gear"/></svg>
<div class="t" style="left:868px;top:1158px;transform:scaleX(0.9938);transform-origin:0 0;">Tool Ray Switch</div>
<svg class="g" style="left:833px;top:1192px"><use href="#gear"/></svg>
<div class="t" style="left:868px;top:1191px;transform:scaleX(1.0050);transform-origin:0 0;">Tool Relative Distance</div>
<svg class="g" style="left:833px;top:1225px"><use href="#gear"/></svg>
<div class="t" style="left:868px;top:1224px;transform:scaleX(1.0184);transform-origin:0 0;">Tool Sample Position</div>
<svg class="g" style="left:833px;top:1258px"><use href="#gear"/></svg>
<div class="t" style="left:868px;top:1257px;transform:scaleX(1.0417);transform-origin:0 0;">Tool Subtract</div>
<svg class="g" style="left:833px;top:1291px"><use href="#gear"/></svg>
<div class="t" style="left:868px;top:1290px;transform:scaleX(1.0303);transform-origin:0 0;">Tool Transform to Matrix</div>
<svg class="g" style="left:833px;top:1324px"><use href="#gear"/></svg>
<div class="t" style="left:868px;top:1323px;transform:scaleX(1.0064);transform-origin:0 0;">Tool UV Coordinate</div>
<svg class="g" style="left:833px;top:1357px"><use href="#gear"/></svg>
<div class="t" style="left:868px;top:1356px;transform:scaleX(0.9928);transform-origin:0 0;">Tool UVW Transform</div>
<svg class="g" style="left:833px;top:1390px"><use href="#gear"/></svg>
<div class="t" style="left:868px;top:1389px;transform:scaleX(1.0074);transform-origin:0 0;">Tool W Coordinate</div>
<svg class="g" style="left:833px;top:1423px"><use href="#gear"/></svg>
<div class="t" style="left:868px;top:1422px;transform:scaleX(1.0108);transform-origin:0 0;">Tool Z Depth</div>
<svg class="g" style="left:833px;top:1456px"><use href="#gear"/></svg>
<div class="t" style="left:868px;top:1455px;transform:scaleX(1.0077);transform-origin:0 0;">Unary Math Operator</div>
<svg class="a" style="left:186px;top:982px" width="16" height="24" viewBox="0 0 16 24"><path d="M1.5,1.5 L1.5,17 L5,13.5 L8,20.5 L10.8,19.3 L7.8,12.5 L12.8,12.5 Z" fill="#fff" stroke="#000" stroke-width="1.1" stroke-linejoin="round"/></svg>
</body></html>
